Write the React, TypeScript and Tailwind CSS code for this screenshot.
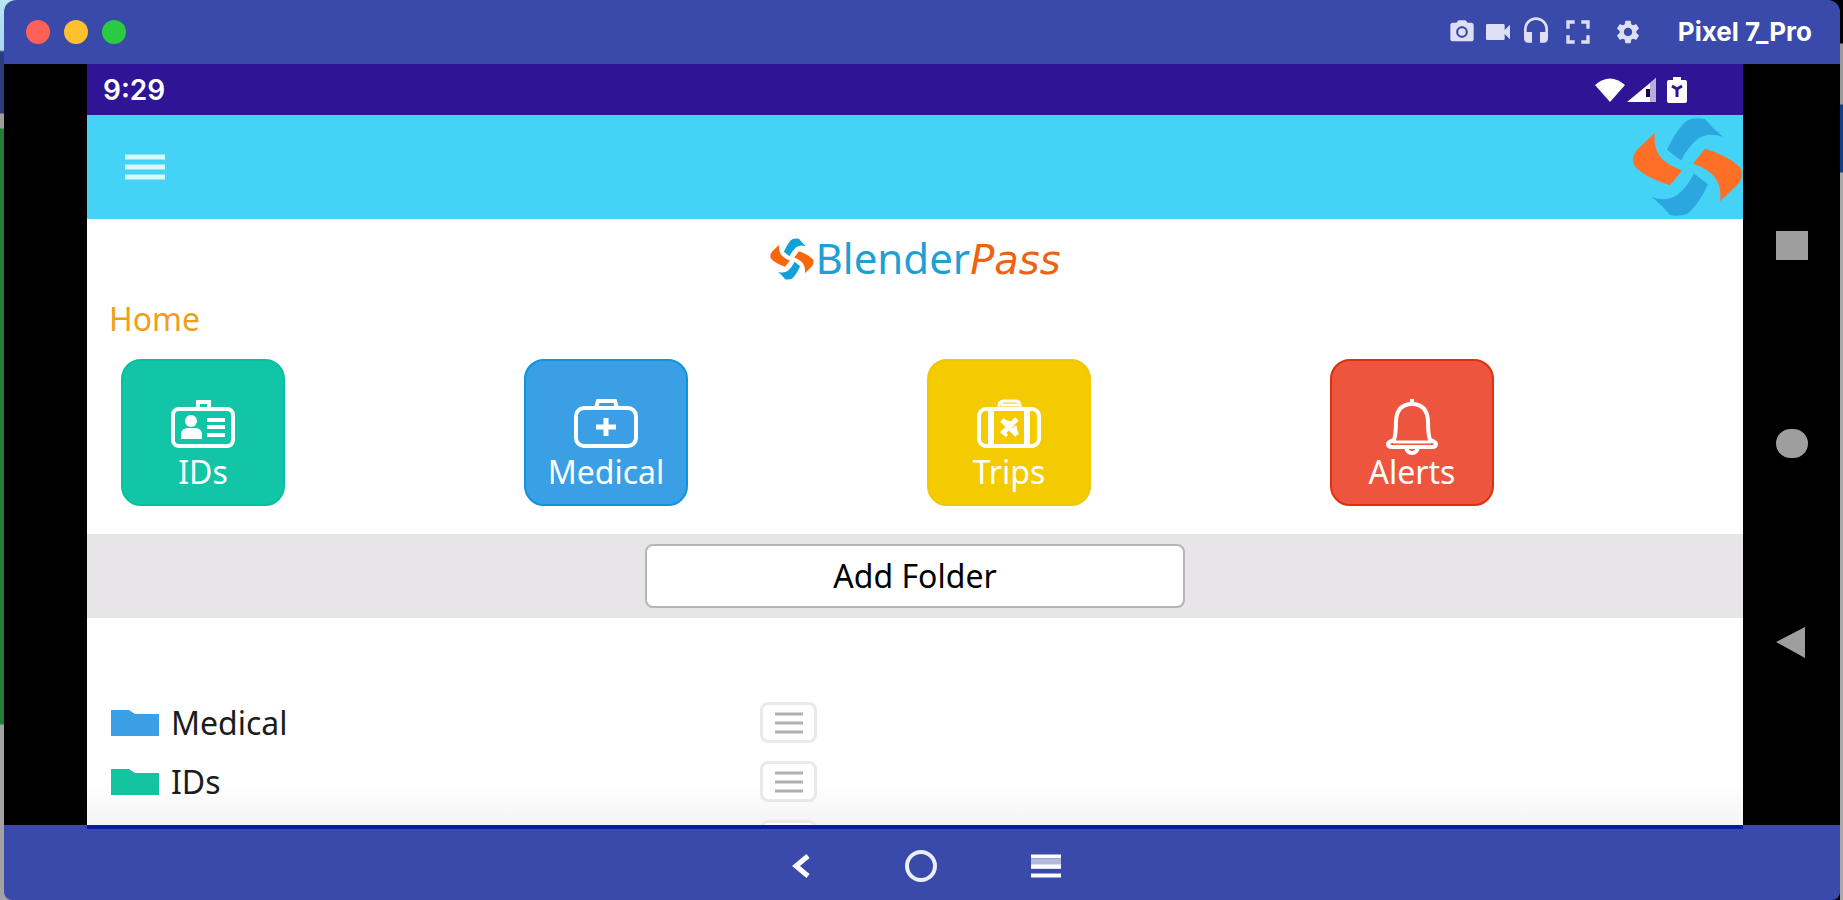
import React from 'react';
import { MdPhotoCamera, MdVideocam, MdHeadset, MdFullscreen, MdSettings } from 'react-icons/md';

const BrandMark = ({ className, blue, orange }: { className: string; blue: string; orange: string }) => (
  <svg viewBox="0 0 111 101" preserveAspectRatio="none" className={className} aria-hidden="true">
    {['rotate(0)', 'rotate(180 55.5 50.5)'].map((turn) => (
      <g key={turn} transform={turn}>
        <path fill={blue} d="M35 33 Q46 10 56 3 Q64 0 73 2 L81 11 L91 20 Q77 15 66 22 Q56 30 49 44 Z" />
        <path fill={orange} d="M23 16 L5 33 Q-2 42 3 50 Q13 61 38 69 L50 54 Q34 48 28 40 Q21 30 23 16 Z" />
      </g>
    ))}
  </svg>
);

const IdIcon = () => (
  <svg viewBox="0 0 64 56" className="w-16 h-14" fill="none" stroke="white" strokeWidth="4">
    <path d="M27 10V3h11v7" />
    <rect x="2" y="10" width="60" height="37" rx="6" />
    <circle cx="20" cy="22" r="6" fill="white" stroke="none" />
    <path d="M10 40v-4q0-7 7-7h7q7 0 7 7v4z" fill="white" stroke="none" />
    <path d="M36 21h18M36 28h18M36 36h18" />
  </svg>
);

const MedicalIcon = () => (
  <svg viewBox="0 0 64 56" className="w-16 h-14" fill="none" stroke="white" strokeWidth="4">
    <path d="M22 9l2-7h17l2 7" />
    <rect x="2" y="9" width="60" height="38" rx="8" />
    <path d="M32 19v18M22 28h20" strokeWidth="5" />
  </svg>
);

const TripsIcon = () => (
  <svg viewBox="0 0 64 56" className="w-16 h-14" fill="none" stroke="white" strokeWidth="3">
    <path d="M22 9V7q0-5 5-5h11q5 0 5 5v2M24 6h17" />
    <rect x="2" y="10" width="60" height="37" rx="7" strokeWidth="4" />
    <path d="M14 10v37M50 10v37" strokeWidth="6" />
    <path d="M25 21l15 15M40 20L26 34" strokeWidth="5" />
    <path d="M24 32l6 5M26 22l8 2M38 27l2 9" />
  </svg>
);

const AlertsIcon = () => (
  <svg viewBox="0 0 64 56" className="w-16 h-14" fill="none" stroke="white" strokeWidth="4" strokeLinejoin="round">
    <path d="M32 0v5" />
    <path d="M14 41q2-6 2-19Q17 5 32 5t16 17q0 13 2 19 6 2 6 4 0 3-4 3H12q-4 0-4-3 0-2 6-4z" />
    <path d="M13 43h38" strokeWidth="3" />
    <path d="M26 48q1 6 6 6t6-6" />
  </svg>
);

const tiles = [
  { name: 'IDs', icon: IdIcon, color: 'bg-[#12c5a6] border-[#05c19e]' },
  { name: 'Medical', icon: MedicalIcon, color: 'bg-[#3a9fe5] border-[#0e94dd]' },
  { name: 'Trips', icon: TripsIcon, color: 'bg-[#f3cb00] border-[#f0c800]' },
  { name: 'Alerts', icon: AlertsIcon, color: 'bg-[#ed553f] border-[#e02f0c]' },
];

const folders = [
  { name: 'Medical', color: 'text-[#3a9fe5]' },
  { name: 'IDs', color: 'text-[#12c5a0]' },
];

const TitleBar = () => (
  <header className="h-16 shrink-0 flex items-center justify-between pl-[22px] pr-7 bg-[#3a4aab] rounded-t-xl">
    <div className="flex gap-[14px]">
      <button aria-label="Close" className="w-6 h-6 rounded-full bg-[#ff6157]" />
      <button aria-label="Minimize" className="w-6 h-6 rounded-full bg-[#ffc02e]" />
      <button aria-label="Zoom" className="w-6 h-6 rounded-full bg-[#2acb42]" />
    </div>
    <div className="flex items-center text-[#dde0f5]">
      <div className="flex items-center gap-[6px]">
        <button aria-label="Screenshot"><MdPhotoCamera className="w-7 h-7" /></button>
        <button aria-label="Record"><MdVideocam className="w-8 h-8" /></button>
        <button aria-label="Audio"><MdHeadset className="w-8 h-8" /></button>
        <button aria-label="Fullscreen"><MdFullscreen className="w-10 h-10" /></button>
      </div>
      <button aria-label="Settings" className="ml-4"><MdSettings className="w-7 h-7" /></button>
      <span className="ml-9 text-[26px] leading-8 font-bold text-white font-['Inter',sans-serif]">Pixel 7_Pro</span>
    </div>
  </header>
);

const StatusBar = () => (
  <div className="h-[51px] shrink-0 flex items-center justify-between pl-4 pr-14 bg-[#2f1596]">
    <span className="text-[28px] leading-8 font-semibold text-white font-['Inter',sans-serif]">9:29</span>
    <div className="flex items-center">
      <svg viewBox="0 0 30 24" className="w-[30px] h-6" fill="white"><path d="M0 7Q15-6 30 7L15 24z" /></svg>
      <svg viewBox="0 0 30 24" className="w-[30px] h-6 ml-[2px]">
        <path d="M0 24L29 0v24z" fill="white" />
        <path d="M23 5l6-5v24h-6z" fill="#b9aedb" />
        <path d="M19 11h4v8h-4z" fill="#150052" />
      </svg>
      <svg viewBox="0 0 20 26" className="w-5 h-[26px] ml-[10px]">
        <path d="M0 5q0-2 2-2h4V0h8v3h4q2 0 2 2v19q0 2-2 2H2q-2 0-2-2z" fill="white" />
        <path d="M5 9l5 3 5-3M10 11v9" stroke="#2f1596" strokeWidth="3" fill="none" />
      </svg>
    </div>
  </div>
);

const AppBar = () => (
  <div className="h-[104px] shrink-0 flex items-center justify-between pl-[38px] bg-[#45d2f7]">
    <button aria-label="Menu">
      <svg viewBox="0 0 40 26" className="w-10 h-[26px]" stroke="#d8f8fe" strokeWidth="5">
        <path d="M0 3h40M0 13h40M0 23h40" />
      </svg>
    </button>
    <BrandMark className="w-[111px] h-[100px]" blue="#2ba6df" orange="#ff6f26" />
  </div>
);

const OptionsButton = ({ label }: { label: string }) => (
  <button
    aria-label={label}
    className="w-[57px] h-[41px] shrink-0 flex items-center justify-center border-[3px] border-[#e9e9e9] rounded-lg bg-white"
  >
    <svg viewBox="0 0 28 24" className="w-7 h-6" stroke="#b0b0b0" strokeWidth="3">
      <path d="M0 3h28M0 12h28M0 21h28" />
    </svg>
  </button>
);

const FolderRow = ({ name, color }: { name: string; color: string }) => (
  <li className="h-[59px] shrink-0 flex items-center">
    <div className="w-[649px] flex items-center gap-3">
      <svg viewBox="0 0 48 26" className={`w-12 h-[26px] ${color}`} fill="currentColor">
        <path d="M0 0h18l6 4h24v22H0z" />
      </svg>
      <span>{name}</span>
    </div>
    <OptionsButton label={`${name} options`} />
  </li>
);

const DeviceKeys = () => (
  <nav className="w-[97px] shrink-0 flex flex-col items-center bg-black text-[#9e9e9e] pt-[167px] gap-[169px]">
    <button aria-label="Overview" className="w-8 h-[29px] bg-[#9e9e9e]" />
    <button aria-label="Home" className="w-8 h-[29px] rounded-full bg-[#9e9e9e]" />
    <button aria-label="Back" className="w-8 h-[31px]">
      <svg viewBox="0 0 32 31" className="w-8 h-[31px]" fill="currentColor"><path d="M0 15L29 0v31z" /></svg>
    </button>
  </nav>
);

const BottomBar = () => (
  <nav className="h-[75px] shrink-0 flex items-center justify-center gap-[94px] pl-2 pt-[6px] bg-[#3a4aab] text-white rounded-b-lg">
    <button aria-label="Back">
      <svg viewBox="0 0 20 24" className="w-5 h-6" fill="none" stroke="currentColor" strokeWidth="5">
        <path d="M17 2L5 12l12 10" />
      </svg>
    </button>
    <button aria-label="Home" className="w-8 h-8 rounded-full border-4 border-[#eceefa]" />
    <button aria-label="Menu">
      <svg viewBox="0 0 30 24" className="w-[30px] h-6">
        <path d="M0 5h30v10H0z" fill="#b4b9de" />
        <path d="M0 2.500h30M0 12.500h30M0 21.500h30" stroke="white" strokeWidth="4" />
      </svg>
    </button>
  </nav>
);

const App = () => {
  return (
    <div className="h-screen flex overflow-hidden font-['Noto_Sans','Open_Sans',sans-serif] bg-[linear-gradient(to_right,transparent_50%,#000_50%,#000_100%),linear-gradient(#b6e8f0_0,#a9d8ec_50px,#2c3c7c_52px,#2c3c7c_113px,#a09a98_114px,#a09a98_128px,#1f7f3b_129px,#1f7f3b_724px,#a3a3a3_725px)]">
      <div className="w-1 shrink-0" />
      <div className="flex-1 min-w-0 flex flex-col">
        <TitleBar />
        <div className="flex-1 min-h-0 flex bg-black">
          <div className="w-[83px] shrink-0 bg-black" />
          {/* the screen's bottom edge lies over the top of the bottom bar */}
          <main className="flex-1 min-w-0 flex flex-col -mb-1 z-10 bg-white text-[32px] leading-10 text-[#1c1c1c] border-b-4 border-[#0a1aa0]">
            <StatusBar />
            <AppBar />
            <div className="shrink-0 pt-3 flex items-center justify-center">
              <BrandMark className="w-11 h-[42px] mr-[2px]" blue="#12a0d8" orange="#f9660c" />
              <h1 className="text-[42px] leading-[54px]">
                <span className="text-[#1f9fd4]">Blender</span>
                <span className="italic text-[40px] text-[#ee6212] font-['DejaVu_Sans',sans-serif]">Pass</span>
              </h1>
            </div>
            <h2 className="shrink-0 mt-3 pl-[22px] text-[#ee9f1c]">Home</h2>
            <div className="shrink-0 mt-5 pl-[34px] pr-[10px] grid grid-cols-4">
              {tiles.map((tile) => (
                <button
                  key={tile.name}
                  className={`w-[164px] h-[147px] flex flex-col items-center pt-[38px] rounded-[20px] border-2 text-white ${tile.color}`}
                >
                  <tile.icon />
                  <span className="-mt-[3px]">{tile.name}</span>
                </button>
              ))}
            </div>
            <div className="h-[84px] shrink-0 mt-7 flex items-center justify-center bg-[#e7e5e7]">
              <button className="w-[540px] h-16 rounded-lg border-2 border-[#b5b5b5] bg-white text-black">Add Folder</button>
            </div>
            <ul className="flex-1 min-h-0 overflow-hidden flex flex-col pt-[75px] pl-6 bg-[linear-gradient(#fff_80%,#f4f4f4)]">
              {folders.map((folder) => (
                <FolderRow key={folder.name} name={folder.name} color={folder.color} />
              ))}
              <li className="h-[59px] shrink-0 flex items-center pl-[649px]">
                <OptionsButton label="Folder options" />
              </li>
            </ul>
          </main>
          <DeviceKeys />
        </div>
        <BottomBar />
      </div>
      <div className="w-[3px] shrink-0 bg-[linear-gradient(#000_43px,#999_44px,#999_104px,#123f86_105px,#123f86_172px,#a8a8a8_173px)]" />
    </div>
  );
};

export default App;
